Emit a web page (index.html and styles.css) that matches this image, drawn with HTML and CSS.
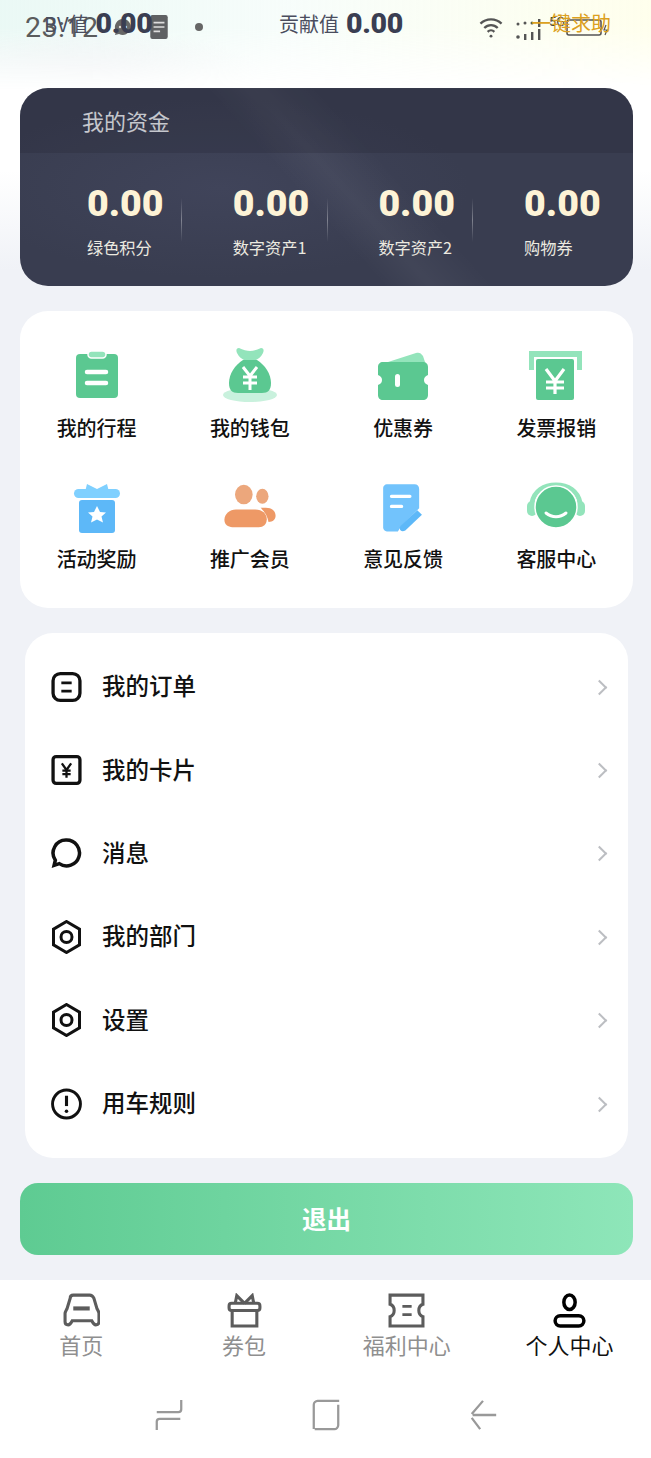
FILE: index.html
```html
<!DOCTYPE html>
<html lang="zh-CN">
<head>
    <meta charset="UTF-8">
    <meta name="viewport" content="width=device-width, initial-scale=1.0">
    <title>个人中心</title>
    <link rel="stylesheet" href="styles.css">
</head>
<body>

<div class="page">
    <div class="top-glow"></div>

    <!-- 系统状态栏，盖在页面头部上面 -->
    <div class="status-bar">
        <span class="status-time">23:12</span>
        <svg class="status-chat" viewBox="0 0 20 20"><path d="M10 2a8 8 0 1 1-4 15l-4 1 1-4a8 8 0 0 1 7-12z" fill="#666"/><circle cx="7" cy="10" r="1.2" fill="#ddd"/><circle cx="13" cy="10" r="1.2" fill="#ddd"/></svg>
        <svg class="status-note" viewBox="0 0 16 22"><rect width="16" height="22" rx="2" fill="#5f6163"/><path d="M3 7h10M3 11h10M3 15h6" stroke="#ddd" stroke-width="1.6"/></svg>
        <span class="status-dot"></span>
        <svg class="status-wifi" viewBox="0 0 26 24" fill="none" stroke="#555" stroke-width="2.4"><path d="M2 8c6-6 16-6 22 0M6 12.500c4-4 10-4 14 0M9.500 16.500c2-2 5-2 7 0"/><circle cx="13" cy="21" r="1.500" fill="#555" stroke="none"/></svg>
        <svg class="status-signal" viewBox="0 0 30 24" fill="#555"><circle cx="2" cy="7" r="1.500"/><circle cx="9" cy="6" r="1.500"/><circle cx="16" cy="6" r="1.500"/><rect x="22" y="2" width="2.400" height="8"/><circle cx="2" cy="20" r="1.800"/><rect x="8" y="17" width="2.400" height="6"/><rect x="15" y="15" width="2.400" height="8"/><rect x="22" y="12" width="2.400" height="11"/></svg>
        <span class="status-five">5G</span>
        <svg class="status-battery" viewBox="0 0 50 22" fill="none"><rect x="1" y="5" width="34" height="15" rx="2" stroke="#555" stroke-width="1.600"/><path d="M40 10l-2 5h3l-2 5" stroke="#555" stroke-width="1.200"/></svg>
    </div>

    <header class="head-row">
        <div class="head-stat head-bv"><span class="head-label">BV值</span><b class="head-num">0.00</b></div>
        <div class="head-stat head-gx"><span class="head-label">贡献值</span><b class="head-num">0.00</b></div>
        <div class="head-help">一键求助</div>
    </header>

    <section class="fund-card">
        <div class="fund-title">我的资金</div>
        <div class="fund-list">
            <div class="fund-item"><b>0.00</b><span>绿色积分</span></div>
            <div class="fund-item"><b>0.00</b><span>数字资产1</span></div>
            <div class="fund-item"><b>0.00</b><span>数字资产2</span></div>
            <div class="fund-item"><b>0.00</b><span>购物券</span></div>
        </div>
    </section>

    <section class="grid-card">
        <div class="grid-item">
            <svg viewBox="0 -3 60 60"><rect x="9" y="6" width="42" height="44" rx="4" fill="#5bc891"/><rect x="21" y="3" width="18" height="7" rx="3.500" fill="#93e4bb" stroke="#fff" stroke-width="1.500"/><path d="M20 24h19M20 35h19" stroke="#fff" stroke-width="4.500" stroke-linecap="round"/></svg>
            <span>我的行程</span>
        </div>
        <div class="grid-item">
            <svg viewBox="0 -3 60 60"><ellipse cx="30" cy="47" rx="27" ry="7" fill="#c9f1dd"/><path d="M19 0c4 2 8 3 11 3s7-1 11-3c3 0 3 3 2 5-2 4-5 6-7 7H24c-2-1-5-3-7-7-1-2-1-5 2-5z" fill="#93e4bb"/><path d="M23 12h14c8 5 14 14 14 23 0 7-3 10-9 10H18c-6 0-9-3-9-10 0-9 6-18 14-23z" fill="#5bc891"/><path d="M23 19l7 9 7-9M30 28v14M23 29h14M23 35h14" stroke="#fff" stroke-width="3" fill="none"/></svg>
            <span>我的钱包</span>
        </div>
        <div class="grid-item">
            <svg viewBox="0 -3 60 60"><path d="M15 14L43 5c3-1 5 0 7 3l2 6z" fill="#93e4bb"/><path d="M10 14h40c3 0 5 2 5 5v8c-3 1-4 3-4 5s1 4 4 5v10c0 3-2 5-5 5H10c-3 0-5-2-5-5V37c3-1 4-3 4-5s-1-4-4-5v-8c0-3 2-5 5-5z" fill="#5bc891"/><rect x="22" y="26" width="5" height="13" rx="2.500" fill="#fff"/></svg>
            <span>优惠券</span>
        </div>
        <div class="grid-item">
            <svg viewBox="0 -4 60 60"><path d="M3 2h53v6H3zM3 8h5v13H3zM51 8h5v13h-5z" fill="#93e4bb"/><rect x="10" y="10" width="38" height="41" rx="2" fill="#5bc891"/><path d="M20 20l9 12 9-12M29 32v13M20 33h18M20 39h18" stroke="#fff" stroke-width="3.200" fill="none"/></svg>
            <span>发票报销</span>
        </div>
        <div class="grid-item">
            <svg viewBox="0 -5 60 60"><path d="M20 3l10 5 10-5 2 8H18z" fill="#7fd0ff"/><rect x="7" y="8" width="46" height="9" rx="4.500" fill="#7fd0ff"/><rect x="12" y="19" width="36" height="33" rx="3" fill="#5db8f8"/><path d="M30 25l3 6 6 .6-4.500 4 1.500 6-6-3.200-6 3.200 1.500-6-4.500-4 6-.6z" fill="#fff"/></svg>
            <span>活动奖励</span>
        </div>
        <div class="grid-item">
            <svg viewBox="-4 -7 68 68"><ellipse cx="23" cy="14" rx="10" ry="11" fill="#eca77c"/><ellipse cx="44" cy="16" rx="7" ry="8.500" fill="#eca77c"/><path d="M14 31h22c8 0 13 5 13 11 0 6-4 9-9 9H10c-5 0-9-3-9-8 0-7 6-12 13-12z" fill="#ee9966"/><path d="M42 29h6c7 0 11 4 11 9 0 4-3 7-8 7-1-6-4-11-9-16z" fill="#ee9966"/></svg>
            <span>推广会员</span>
        </div>
        <div class="grid-item">
            <svg viewBox="0 -8 65 65"><path d="M15 1h30c3 0 5 2 5 5v21L30 47l-3 5H15c-2 0-4-2-4-4V5c0-2 2-4 4-4z" fill="#72c3fc"/><path d="M20 14h20M20 25h11" stroke="#fff" stroke-width="3.500" stroke-linecap="round"/><path d="M48 29l5 5-18 17c-2 1-4 1-5 0-2-2-1-4 0-5z" fill="#5db8f8"/></svg>
            <span>意见反馈</span>
        </div>
        <div class="grid-item">
            <svg viewBox="0 0 60 60"><path d="M6 27C8 15 18 9 30 9s22 6 24 18" fill="none" stroke="#93e4bb" stroke-width="5"/><rect x="1" y="25" width="10" height="15" rx="5" fill="#93e4bb"/><rect x="49" y="25" width="10" height="15" rx="5" fill="#93e4bb"/><circle cx="30" cy="31" r="21" fill="#5bc891" stroke="#fff" stroke-width="1.500"/><path d="M20 37c6 5 14 5 20 0" fill="none" stroke="#fff" stroke-width="3" stroke-linecap="round"/></svg>
            <span>客服中心</span>
        </div>
    </section>

    <section class="menu-card">
        <div class="menu-row">
            <svg viewBox="0 0 30 30" fill="none" stroke="#111" stroke-width="3.200"><rect x="2" y="2" width="26" height="26" rx="7"/><path d="M10 11h10M10 19h10" stroke-width="2.600"/></svg>
            <span>我的订单</span><i class="menu-arrow"></i>
        </div>
        <div class="menu-row">
            <svg viewBox="0 0 30 30" fill="none" stroke="#111" stroke-width="3.200"><rect x="2" y="2" width="26" height="26" rx="3"/><path d="M10.500 8.500l4.500 6.500 4.500-6.500M15 15v7.500M11 15.500h8M11 19h8" stroke-width="2.200"/></svg>
            <span>我的卡片</span><i class="menu-arrow"></i>
        </div>
        <div class="menu-row">
            <svg viewBox="0 0 30 30" fill="none" stroke="#111" stroke-width="3.400"><path d="M15 2.500a12.500 12.500 0 1 1-7 22.800l-5 1.700 1.200-5A12.500 12.500 0 0 1 15 2.500z"/></svg>
            <span>消息</span><i class="menu-arrow"></i>
        </div>
        <div class="menu-row">
            <svg viewBox="0 0 30 34" fill="none" stroke="#111" stroke-width="3"><path d="M15 1.500l13 7.700v15.600l-13 7.700-13-7.700V9.200z"/><circle cx="15" cy="17" r="5.500"/></svg>
            <span>我的部门</span><i class="menu-arrow"></i>
        </div>
        <div class="menu-row">
            <svg viewBox="0 0 30 34" fill="none" stroke="#111" stroke-width="3"><path d="M15 1.500l13 7.700v15.600l-13 7.700-13-7.700V9.200z"/><circle cx="15" cy="17" r="5.500"/></svg>
            <span>设置</span><i class="menu-arrow"></i>
        </div>
        <div class="menu-row">
            <svg viewBox="0 0 30 30" fill="none" stroke="#111" stroke-width="2.800"><circle cx="15" cy="15" r="13.500"/><path d="M15 7v10" stroke-width="3"/><circle cx="15" cy="22" r="1.700" fill="#111" stroke="none"/></svg>
            <span>用车规则</span><i class="menu-arrow"></i>
        </div>
    </section>

    <div class="logout-btn">退出</div>

    <footer class="footer">
        <nav class="tab-bar">
            <div class="tab-item">
                <svg viewBox="0 0 36 34" fill="none" stroke="#5c5c5c" stroke-width="3"><path d="M10 2h16c2 0 3 1 4 3l3 10c1 2 2 3 2 5v8c0 2-1 3-3 3s-3-2-4-4H9c-1 2-2 4-4 4s-3-1-3-3v-8c0-2 1-3 2-5L7 5c0-2 1-3 3-3z"/><path d="M10 15h16" stroke-width="4"/></svg>
                <span>首页</span>
            </div>
            <div class="tab-item">
                <svg viewBox="0 0 36 34" fill="none" stroke="#5c5c5c" stroke-width="3"><rect x="3" y="10" width="30" height="7" rx="2.500"/><path d="M6 17v15h24V17M18 10L10.500 2.500 9 10M18 10l7.500-7.500L27 10"/></svg>
                <span>券包</span>
            </div>
            <div class="tab-item">
                <svg viewBox="0 0 36 34" fill="none" stroke="#5c5c5c" stroke-width="3"><path d="M2 2h32v9c-3 1-4 3-4 6s1 5 4 6v9H2v-9c3-1 4-3 4-6s-1-5-4-6z"/><path d="M14 13h9M14 21h9" stroke-width="2.800"/></svg>
                <span>福利中心</span>
            </div>
            <div class="tab-item tab-active">
                <svg viewBox="0 0 36 34" fill="none" stroke="#000" stroke-width="3.400"><ellipse cx="18" cy="9" rx="5.500" ry="7"/><rect x="4" y="22" width="28" height="10" rx="5"/></svg>
                <span>个人中心</span>
            </div>
        </nav>
        <div class="sys-nav">
            <svg viewBox="0 0 30 34" fill="none" stroke="#999" stroke-width="2.400"><path d="M2 33V24c0-2 1-3 3-3h22M28 1v10c0 2-1 3-3 3H2"/></svg>
            <svg viewBox="0 0 30 34" fill="none" stroke="#999" stroke-width="2.400"><path d="M2 32V6c0-2 2-4 4-4h23M28 6v22c0 2-2 4-4 4H3"/></svg>
            <svg viewBox="0 0 30 34" fill="none" stroke="#999" stroke-width="2.400"><path d="M29 17H4M15 2L3 16M3 20l9 12"/></svg>
        </div>
    </footer>
</div>

</body>
</html>
```

FILE: styles.css
```css
* {
    box-sizing: border-box;
}

html, body {
    margin: 0;
    padding: 0;
}

body {
    width: 651px;
    height: 1458px;
    overflow: hidden;
    background-color: #f0f2f7;
    font-family: "Noto Sans CJK SC", "Noto Sans", sans-serif;
}

.page {
    position: relative;
    width: 651px;
    height: 1458px;
    display: flex;
    flex-direction: column;
    background: linear-gradient(180deg, #fff 0, #fff 170px, #f0f2f7 270px);
}

/* 顶部淡淡的彩色光晕 */
.top-glow {
    position: absolute;
    top: 0;
    left: 0;
    width: 651px;
    height: 90px;
    background:
        radial-gradient(ellipse 170px 40px at 90px 70px, rgba(232, 234, 238, 0.8), rgba(255, 255, 255, 0) 100%),
        linear-gradient(90deg, rgba(232, 248, 244, 0.9), rgba(242, 252, 248, 0.6) 45%, rgba(255, 255, 232, 0.8));
    -webkit-mask-image: linear-gradient(180deg, #000 30%, transparent);
    mask-image: linear-gradient(180deg, #000 30%, transparent);
}

/* 状态栏 */
.status-bar {
    position: absolute;
    top: 0;
    left: 0;
    width: 651px;
    height: 50px;
}

.status-bar > * {
    position: absolute;
}

.status-time {
    left: 25px;
    top: 10px;
    font-family: Roboto, sans-serif;
    font-size: 28.500px;
    line-height: 36px;
    letter-spacing: 0.5px;
    color: #5a5c5c;
}

.status-chat {
    left: 113px;
    top: 17px;
    width: 20px;
    height: 20px;
}

.status-note {
    left: 150px;
    top: 15px;
    width: 18px;
    height: 24px;
}

.status-dot {
    left: 195px;
    top: 23px;
    width: 8px;
    height: 8px;
    border-radius: 50%;
    background-color: #666;
}

.status-wifi {
    left: 478px;
    top: 16px;
    width: 26px;
    height: 23px;
}

.status-signal {
    left: 516px;
    top: 17px;
    width: 30px;
    height: 24px;
}

.status-five {
    left: 549px;
    top: 12px;
    font-family: Roboto, sans-serif;
    font-size: 13px;
    line-height: 20px;
    color: #444;
}

.status-battery {
    left: 566px;
    top: 15px;
    width: 50px;
    height: 22px;
}

/* 头部数值 */
.head-row {
    position: relative;
    flex: none;
    height: 88px;
}

.head-stat {
    position: absolute;
    top: 4px;
    display: flex;
    align-items: center;
    height: 38px;
    color: #3a3e52;
}

.head-bv {
    left: 44px;
}

.head-gx {
    left: 279px;
}

.head-label {
    font-size: 20px;
    margin-right: 7px;
    color: #4a4d5e;
}

.head-num {
    font-family: Roboto, sans-serif;
    font-size: 28.500px;
    font-weight: 900;
    letter-spacing: -0.3px;
}

.head-help {
    position: absolute;
    left: 531px;
    top: 8px;
    font-size: 20px;
    line-height: 30px;
    color: #dca020;
}

/* 我的资金 */
.fund-card {
    flex: none;
    margin: 0 18px 0 20px;
    height: 198px;
    border-radius: 28px;
    overflow: hidden;
    color: #fff;
    background:
        linear-gradient(48deg, rgba(255, 255, 255, 0) 46%, rgba(255, 255, 255, 0.045) 52%, rgba(255, 255, 255, 0) 60%),
        radial-gradient(ellipse 250px 90px at 200px 100px, #40445a, rgba(64, 68, 90, 0)),
        #393d50;
}

.fund-title {
    height: 65px;
    padding-left: 62px;
    font-size: 22px;
    line-height: 65px;
    color: #c5c7cd;
    background-color: rgba(30, 33, 46, 0.22);
}

.fund-list {
    display: grid;
    grid-template-columns: repeat(4, 145.7px);
    padding: 27px 0 0 67px;
}

.fund-item {
    position: relative;
    display: flex;
    flex-direction: column;
}

.fund-item b {
    font-family: Roboto, sans-serif;
    font-size: 37.500px;
    font-weight: 900;
    line-height: 46px;
    color: #fdf3d6;
}

.fund-item span {
    margin-top: 9px;
    font-size: 16.200px;
    line-height: 24px;
    color: #eceae0;
}

.fund-item:not(:last-child)::after {
    content: "";
    position: absolute;
    left: 94px;
    top: 18px;
    width: 1px;
    height: 44px;
    background: linear-gradient(180deg, rgba(255, 255, 255, 0), rgba(255, 255, 255, 0.35), rgba(255, 255, 255, 0));
}

/* 功能入口 */
.grid-card {
    flex: none;
    display: grid;
    grid-template-columns: repeat(4, 1fr);
    grid-auto-rows: 131px;
    margin: 25px 18px 0 20px;
    height: 297px;
    padding-top: 34px;
    border-radius: 28px;
    background-color: #fff;
}

.grid-item {
    display: flex;
    flex-direction: column;
    align-items: center;
}

.grid-item svg {
    width: 60px;
    height: 60px;
}

.grid-item span {
    margin-top: 8px;
    font-size: 20px;
    font-weight: 500;
    line-height: 30px;
    color: #111;
}

/* 列表菜单 */
.menu-card {
    flex: none;
    margin: 25px 23px 0 25px;
    height: 525px;
    padding: 12px 0;
    border-radius: 28px;
    background-color: #fff;
}

.menu-row {
    position: relative;
    display: flex;
    align-items: center;
    height: 83.400px;
    padding-left: 26px;
}

.menu-row svg {
    width: 31px;
    height: 34px;
}

.menu-row span {
    margin-left: 20px;
    margin-top: -3px;
    font-size: 23.500px;
    font-weight: 500;
    color: #111;
}

.menu-arrow {
    position: absolute;
    right: 23px;
    top: 50%;
    width: 11px;
    height: 11px;
    margin-top: -5px;
    border-top: 2px solid #bcbec2;
    border-right: 2px solid #bcbec2;
    transform: rotate(45deg);
}

.logout-btn {
    flex: none;
    margin: 25px 18px 0 20px;
    height: 72px;
    border-radius: 18px;
    font-size: 24.500px;
    font-weight: 700;
    line-height: 72px;
    text-align: center;
    color: #fff;
    background: linear-gradient(90deg, #5ecb92, #8ee6b9);
}

/* 底部标签栏 */
.footer {
    flex: none;
    margin-top: 25px;
    height: 178px;
    background-color: #fff;
}

.tab-bar {
    display: grid;
    grid-template-columns: repeat(4, 1fr);
    padding-top: 13px;
}

.tab-item {
    display: flex;
    flex-direction: column;
    align-items: center;
    color: #8f8f8f;
    font-size: 22px;
    line-height: 34px;
}

.tab-item svg {
    width: 37px;
    height: 35px;
}

.tab-item span {
    margin-top: -1px;
}

.tab-active {
    color: #111;
}

.sys-nav {
    display: grid;
    grid-template-columns: repeat(3, 157px);
    justify-content: center;
    justify-items: center;
    margin-top: 38px;
}

.sys-nav svg {
    width: 30px;
    height: 32px;
}
```
